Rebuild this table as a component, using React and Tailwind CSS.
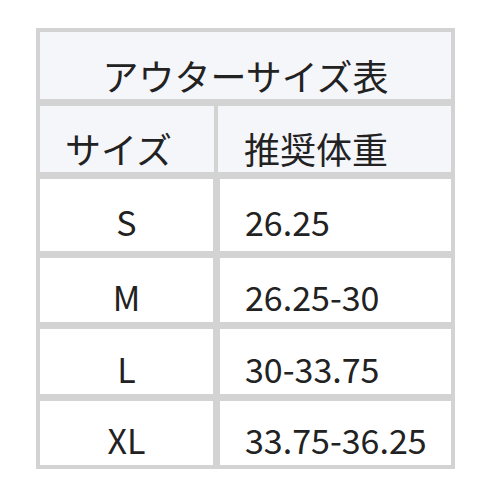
import React from "react";

// size chart table
const ROWS = [
  { size: "S", weight: "26.25", h: "h-[72px]" },
  { size: "M", weight: "26.25-30", h: "h-[64px]" },
  { size: "L", weight: "30-33.75", h: "h-[65px]" },
  { size: "XL", weight: "33.75-36.25", h: "h-[64px]" },
];

export default function App() {
  return (
    <div
      className="min-h-screen bg-white pt-[28px] pl-[36px] text-[34px] text-[#222]"
      style={{ fontFamily: '"Noto Sans CJK JP", "Noto Sans", sans-serif' }}
    >
      <div className="w-[419px] border-4 border-[#d3d3d3] bg-[#d3d3d3] flex flex-col gap-[7px]">
        {/* title */}
        <div className="h-[67px] bg-[#f5f6fa] flex items-end justify-center pb-[6px] leading-none text-[36px]">
          アウターサイズ表
        </div>

        {/* header */}
        <div className="grid grid-cols-[174px_1fr] gap-[4px] text-[36px]">
          <div className="h-[66px] bg-[#f5f6fa] flex items-end pl-[25px] pb-[6px] leading-none">サイズ</div>
          <div className="h-[66px] bg-[#f5f6fa] flex items-end pl-[26px] pb-[6px] leading-none">推奨体重</div>
        </div>

        {/* body */}
        {ROWS.map((r) => (
          <div key={r.size} className="grid grid-cols-[173px_1fr] gap-[7px]">
            <div className={`${r.h} bg-white flex items-center justify-center pt-[14px] leading-none`}>
              {r.size}
            </div>
            <div className={`${r.h} bg-white flex items-center pl-[25px] pt-[14px] leading-none`}>
              {r.weight}
            </div>
          </div>
        ))}
      </div>
    </div>
  );
}
